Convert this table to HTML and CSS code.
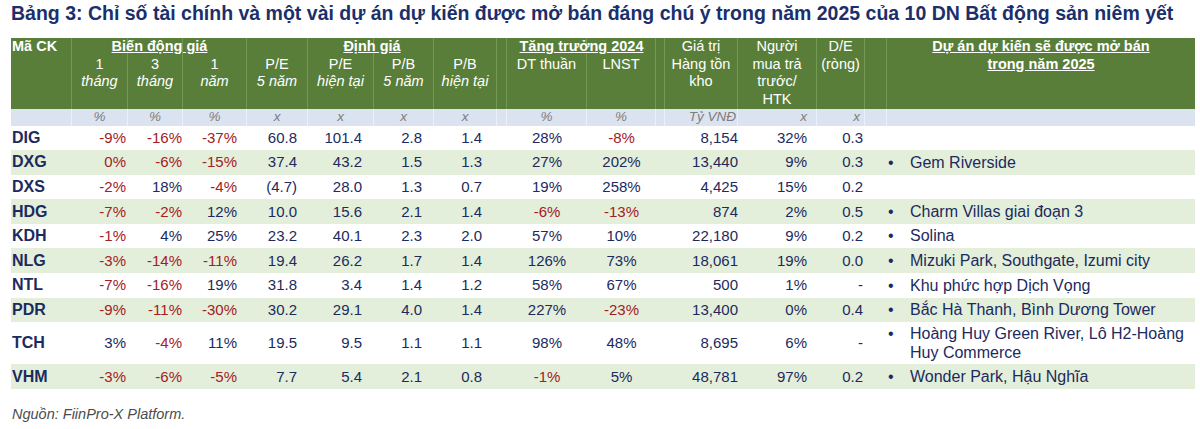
FILE: index.html
```html
<!DOCTYPE html>
<html lang="vi">
<head>
<meta charset="utf-8">
<title>Bảng 3</title>
<link rel="stylesheet" href="styles.css">
</head>
<body>
<h1 class="title">Bảng 3: Chỉ số tài chính và một vài dự án dự kiến được mở bán đáng chú ý trong năm 2025 của 10 DN Bất động sản niêm yết</h1>
<div class="tbl">
  <div class="thead">
    <div class="hcols">
      <div class="hc lead"><b>Mã CK</b></div>
      <div class="hc sub">1<br><i>tháng</i></div>
      <div class="hc sub">3<br><i>tháng</i></div>
      <div class="hc sub">1<br><i>năm</i></div>
      <div class="hc sub">P/E<br><i>5 năm</i></div>
      <div class="hc sub">P/E<br><i>hiện tại</i></div>
      <div class="hc sub">P/B<br><i>5 năm</i></div>
      <div class="hc sub">P/B<br><i>hiện tại</i></div>
      <div class="hc"></div>
      <div class="hc sub">DT thuần</div>
      <div class="hc sub">LNST</div>
      <div class="hc"></div>
      <div class="hc">Giá trị<br>Hàng tồn<br>kho</div>
      <div class="hc">Người<br>mua trả<br>trước/<br>HTK</div>
      <div class="hc">D/E<br>(ròng)</div>
      <div class="hc"></div>
      <div class="hc last"><b><u>Dự án dự kiến sẽ được mở bán<br>trong năm 2025</u></b></div>
    </div>
    <div class="htitles">
      <div class="grp g1"><u>Biến động giá</u></div>
      <div class="grp g2"><u>Định giá</u></div>
      <div class="grp g3"><u>Tăng trưởng 2024</u></div>
    </div>
  </div>
  <div class="units">
    <span></span><span>%</span><span>%</span><span>%</span><span>x</span><span>x</span><span>x</span><span>x</span><span></span><span>%</span><span>%</span><span></span><span>Tỷ VNĐ</span><span>x</span><span>x</span><span></span><span></span>
  </div>

  <div class="row">
    <span class="tk">DIG</span><span class="neg">-9%</span><span class="neg">-16%</span><span class="neg">-37%</span><span>60.8</span><span>101.4</span><span>2.8</span><span>1.4</span><span></span><span>28%</span><span class="neg">-8%</span><span></span><span>8,154</span><span>32%</span><span>0.3</span><span></span><span class="pj"></span>
  </div>
  <div class="row alt">
    <span class="tk">DXG</span><span class="neg">0%</span><span class="neg">-6%</span><span class="neg">-15%</span><span>37.4</span><span>43.2</span><span>1.5</span><span>1.3</span><span></span><span>27%</span><span>202%</span><span></span><span>13,440</span><span>9%</span><span>0.3</span><span></span><span class="pj"><i class="bl">•</i><em>Gem Riverside</em></span>
  </div>
  <div class="row">
    <span class="tk">DXS</span><span class="neg">-2%</span><span>18%</span><span class="neg">-4%</span><span>(4.7)</span><span>28.0</span><span>1.3</span><span>0.7</span><span></span><span>19%</span><span>258%</span><span></span><span>4,425</span><span>15%</span><span>0.2</span><span></span><span class="pj"></span>
  </div>
  <div class="row alt">
    <span class="tk">HDG</span><span class="neg">-7%</span><span class="neg">-2%</span><span>12%</span><span>10.0</span><span>15.6</span><span>2.1</span><span>1.4</span><span></span><span class="neg">-6%</span><span class="neg">-13%</span><span></span><span>874</span><span>2%</span><span>0.5</span><span></span><span class="pj"><i class="bl">•</i><em>Charm Villas giai đoạn 3</em></span>
  </div>
  <div class="row">
    <span class="tk">KDH</span><span class="neg">-1%</span><span>4%</span><span>25%</span><span>23.2</span><span>40.1</span><span>2.3</span><span>2.0</span><span></span><span>57%</span><span>10%</span><span></span><span>22,180</span><span>9%</span><span>0.2</span><span></span><span class="pj"><i class="bl">•</i><em>Solina</em></span>
  </div>
  <div class="row alt">
    <span class="tk">NLG</span><span class="neg">-3%</span><span class="neg">-14%</span><span class="neg">-11%</span><span>19.4</span><span>26.2</span><span>1.7</span><span>1.4</span><span></span><span>126%</span><span>73%</span><span></span><span>18,061</span><span>19%</span><span>0.0</span><span></span><span class="pj"><i class="bl">•</i><em>Mizuki Park, Southgate, Izumi city</em></span>
  </div>
  <div class="row">
    <span class="tk">NTL</span><span class="neg">-7%</span><span class="neg">-16%</span><span>19%</span><span>31.8</span><span>3.4</span><span>1.4</span><span>1.2</span><span></span><span>58%</span><span>67%</span><span></span><span>500</span><span>1%</span><span>-</span><span></span><span class="pj"><i class="bl">•</i><em>Khu phức hợp Dịch Vọng</em></span>
  </div>
  <div class="row alt">
    <span class="tk">PDR</span><span class="neg">-9%</span><span class="neg">-11%</span><span class="neg">-30%</span><span>30.2</span><span>29.1</span><span>4.0</span><span>1.4</span><span></span><span>227%</span><span class="neg">-23%</span><span></span><span>13,400</span><span>0%</span><span>0.4</span><span></span><span class="pj"><i class="bl">•</i><em>Bắc Hà Thanh, Bình Dương Tower</em></span>
  </div>
  <div class="row">
    <span class="tk">TCH</span><span>3%</span><span class="neg">-4%</span><span>11%</span><span>19.5</span><span>9.5</span><span>1.1</span><span>1.1</span><span></span><span>98%</span><span>48%</span><span></span><span>8,695</span><span>6%</span><span>-</span><span></span><span class="pj"><i class="bl">•</i><em>Hoàng Huy Green River, Lô H2-Hoàng Huy Commerce</em></span>
  </div>
  <div class="row alt">
    <span class="tk">VHM</span><span class="neg">-3%</span><span class="neg">-6%</span><span class="neg">-5%</span><span>7.7</span><span>5.4</span><span>2.1</span><span>0.8</span><span></span><span class="neg">-1%</span><span>5%</span><span></span><span>48,781</span><span>97%</span><span>0.2</span><span></span><span class="pj"><i class="bl">•</i><em>Wonder Park, Hậu Nghĩa</em></span>
  </div>
</div>
<p class="source">Nguồn: FiinPro-X Platform.</p>
</body>
</html>
```
FILE: styles.css
```css
:root {
  --cols: 61px 56px 55px 64px 61px 66px 60px 63px 10px 80px 69px 9px 73px 79px 48px 22px 308px;
  --navy: #1c2a5e;
  --red: #a4201f;
}
* { box-sizing: border-box; }
html, body { margin: 0; padding: 0; background: #fff; }
body {
  font-family: "Liberation Sans", Arial, sans-serif;
  color: var(--navy);
  padding-left: 11px;
}
.title {
  margin: 0 0 14px 0;
  padding-top: 2px;
  font-size: 19.5px;
  line-height: 22px;
  font-weight: bold;
  color: #1b2f6b;
  white-space: nowrap;
}
.tbl { width: 1184px; }

/* header */
.thead { display: grid; background: #587e3a; color: #fff; }
.thead > * { grid-area: 1 / 1; }
.hcols {
  display: grid;
  grid-template-columns: var(--cols);
  height: 71px;
  font-size: 14.5px;
  line-height: 17.5px;
}
.hc {
  text-align: center;
  border-right: 1px solid #739a53;
  padding-top: 0;
}
.hc.sub { padding-top: 17.5px; }
.hc.lead { text-align: left; padding-left: 1px; }
.hc.last { border-right: 0; }
.htitles {
  display: grid;
  grid-template-columns: var(--cols);
  align-content: start;
  font-size: 14.5px;
  line-height: 17.5px;
  font-weight: bold;
}
.grp { grid-row: 1; text-align: center; }
.g1 { grid-column: 2 / 5; }
.g2 { grid-column: 5 / 9; }
.g3 { grid-column: 10 / 12; }

/* units row */
.units {
  display: grid;
  grid-template-columns: var(--cols);
  height: 16.5px;
  background: #dbe2f0;
  color: #7d7d7d;
  font-style: italic;
  font-size: 13.5px;
  line-height: 16.5px;
}
.units > span { text-align: center; border-right: 1px solid #eceff7; }
.units > span:last-child { border-right: 0; }
.units > span:nth-child(13) { text-align: right; padding-right: 1px; }
.units > span:nth-child(14) { text-align: right; padding-right: 9px; }
.units > span:nth-child(15) { text-align: right; padding-right: 4px; }

/* body rows */
.row {
  display: grid;
  grid-template-columns: var(--cols);
  align-items: center;
  padding: 1.3px 0;
  font-size: 15px;
  line-height: 22px;
}
.row.alt { background: #e3efda; }
.row > span { text-align: right; white-space: nowrap; }
.row > .tk { text-align: left; font-weight: bold; font-size: 16px; padding-left: 1px; }
.row > :nth-child(2) { padding-right: 2px; }
.row > :nth-child(3) { padding-right: 1px; }
.row > :nth-child(4) { padding-right: 10px; }
.row > :nth-child(5) { padding-right: 11px; }
.row > :nth-child(6) { padding-right: 12px; }
.row > :nth-child(7) { padding-right: 12px; }
.row > :nth-child(8) { padding-right: 15px; }
.row > :nth-child(10), .row > :nth-child(11) { text-align: center; }
.row > :nth-child(13) { padding-right: 0; }
.row > :nth-child(14) { padding-right: 10px; }
.row > :nth-child(15) { padding-right: 2px; }
.row > .pj {
  text-align: left;
  white-space: normal;
  display: flex;
  align-items: flex-start;
  font-size: 16px;
  line-height: 19.7px;
}
.bl { font-style: normal; width: 23px; flex: none; padding-left: 1px; }
.pj em { font-style: normal; }
.neg { color: var(--red); }

.source {
  margin: 17px 0 0 1px;
  font-size: 14.5px;
  line-height: 17px;
  font-style: italic;
  color: #4d4d4d;
}
```
